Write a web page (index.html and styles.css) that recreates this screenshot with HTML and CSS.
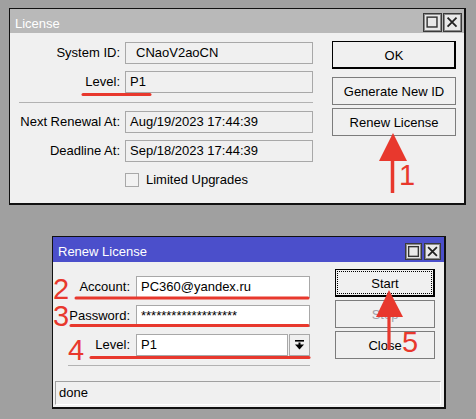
FILE: index.html
```html
<!DOCTYPE html>
<html>
<head>
<meta charset="utf-8">
<link rel="stylesheet" href="styles.css">
</head>
<body>
<div class="win win1">
  <div class="titlebar tb1">
    <span class="title">License</span>
    <div class="tbtns">
      <span class="tbtn"><svg viewBox="0 0 19 19" class="ico"><rect x="3.5" y="3.5" width="11" height="11" fill="#e9e9e9" stroke="#333" stroke-width="1.6"/></svg></span>
      <span class="tbtn"><svg viewBox="0 0 19 19" class="ico"><path d="M4 4 L14 14 M14 4 L4 14" stroke="#222" stroke-width="2" fill="none"/></svg></span>
    </div>
  </div>
  <div class="body1">
    <div class="form1">
      <span class="lbl">System ID:</span>
      <span class="field ro"><span class="sid">CNaoV2aoCN</span></span>
      <span class="lbl">Level:</span>
      <span class="field ro">P1</span>
      <span class="sep sep1"></span>
      <span class="lbl">Next Renewal At:</span>
      <span class="field ro">Aug/19/2023 17:44:39</span>
      <span class="lbl">Deadline At:</span>
      <span class="field ro">Sep/18/2023 17:44:39</span>
      <span class="chkrow"><span class="chk"></span><span>Limited Upgrades</span></span>
    </div>
    <div class="btns1">
      <button class="btn def okbtn">OK</button>
      <button class="btn genbtn">Generate New ID</button>
      <button class="btn">Renew License</button>
    </div>
  </div>
</div>

<div class="win win2">
  <div class="titlebar tb2">
    <span class="title">Renew License</span>
    <div class="tbtns">
      <span class="tbtn small"><svg viewBox="0 0 17 17" class="ico"><rect x="3" y="3" width="11" height="11" fill="#e9e9e9" stroke="#333" stroke-width="1.6"/></svg></span>
      <span class="tbtn small"><svg viewBox="0 0 17 17" class="ico"><path d="M3.5 3.5 L13.5 13.5 M13.5 3.5 L3.5 13.5" stroke="#222" stroke-width="2" fill="none"/></svg></span>
    </div>
  </div>
  <div class="main2">
    <div class="form2">
      <span class="lbl">Account:</span>
      <span class="field wh">PC360@yandex.ru</span>
      <span class="lbl">Password:</span>
      <span class="field wh">*******************</span>
      <span class="lbl">Level:</span>
      <span class="combo"><span class="field wh grow">P1</span><span class="drop"><svg viewBox="0 0 9 10" width="9" height="10"><rect x="0" y="0" width="9" height="1.6" fill="#000"/><rect x="3.5" y="2.5" width="2" height="2.5" fill="#000"/><path d="M0 4.5 L9 4.5 L4.5 9.5 Z" fill="#000"/></svg></span></span>
      <span class="sep sep2"></span>
    </div>
    <div class="btns2">
      <button class="btn def focus">Start</button>
      <button class="btn dis">Stop</button>
      <button class="btn">Close</button>
    </div>
  </div>
  <div class="status">done</div>
</div>

<svg class="marks" width="476" height="419" viewBox="0 0 476 419">
  <g stroke="#e8382d" stroke-width="3" stroke-linecap="round" fill="none">
    <line x1="83" y1="94.5" x2="150" y2="94.5"/>
    <line x1="76" y1="298" x2="308" y2="298"/>
    <line x1="71" y1="325.5" x2="308" y2="325.5"/>
    <line x1="91" y1="357.5" x2="309" y2="357.5"/>
    <line x1="392.5" y1="158" x2="392.5" y2="193" stroke-width="3.5" stroke-linecap="butt"/>
    <line x1="389" y1="315" x2="389" y2="350" stroke-width="3.2" stroke-linecap="butt"/>
  </g>
  <g fill="#e8382d">
    <path d="M393 133 L379 161 L407 161 Z"/>
    <path d="M389 290 L376 317 L403 317 Z"/>
  </g>
</svg>
<span class="num n1">1</span>
<span class="num n2">2</span>
<span class="num n3">3</span>
<span class="num n4">4</span>
<span class="num n5">5</span>
</body>
</html>
```

FILE: styles.css
```css
* { box-sizing: border-box; }
html, body { margin: 0; padding: 0; }
body {
  background: #a0a0a0;
  font-family: "Liberation Sans", Arial, sans-serif;
  font-size: 13px;
  color: #000;
  width: 476px;
  height: 419px;
  overflow: hidden;
  position: relative;
}
.win {
  background: #f0f0f0;
  border-style: solid;
  border-color: #111;
  border-width: 1px 2px 2px 1px;
  display: flex;
  flex-direction: column;
}
.win1 { margin: 8px 0 0 9px; width: 457px; height: 197px; }
.win2 { margin: 31px 0 0 52px; width: 394px; height: 173px; }

.titlebar { display: flex; justify-content: space-between; align-items: flex-start; color: #fff; flex: none; }
.title { line-height: 15px; padding-top: 3px; white-space: nowrap; }
.tb1 { background: #b9b9b9; height: 24px; padding: 4px 2px 0 5px; }
.tb2 { background: #4b4fcb; height: 25px; padding: 6px 3px 0 5px; }
.tb2 .title { padding-top: 1px; }
.tbtns { display: flex; gap: 1px; }
.tb2 .tbtns { gap: 2px; }
.tbtn {
  width: 19px; height: 19px;
  background: #e9e9e9;
  border: 1px solid #3a3a3a;
  box-shadow: inset 0 0 0 1px #8a8a8a;
  display: flex;
}
.tbtn.small { width: 17px; height: 17px; }
.ico { width: 100%; height: 100%; display: block; }

.lbl { text-align: right; line-height: 22px; white-space: nowrap; }
.field {
  height: 22px;
  border: 1px solid #a8a8a8;
  padding-left: 4px;
  line-height: 20px;
  white-space: nowrap;
  overflow: hidden;
}
.field.ro { background: #f0f0f0; }
.field.wh { background: #fff; }
.sid { padding-left: 6px; }
.sep { grid-column: 1 / -1; height: 1px; background: #b2b2b2; }

.body1 { display: flex; padding: 8px 0 0 0; }
.form1 {
  display: grid;
  grid-template-columns: 110px 188px;
  column-gap: 5px;
  row-gap: 7px;
  padding-top: 1px;
  align-content: start;
}
.sep1 { margin: 2px 0 1px 9px; }
.chkrow { grid-column: 2; display: flex; align-items: center; gap: 7px; height: 14px; margin-top: 4px; line-height: 14px; }
.chk { width: 14px; height: 14px; border: 1px solid #a8a8a8; background: #f2f2f2; flex: none; }

.btns1 { display: flex; flex-direction: column; margin-left: 19px; width: 124px; }
.btn {
  height: 28px;
  border: 1px solid #7c7c7c;
  background: #f0f0f0;
  font-family: inherit;
  font-size: 13px;
  color: #000;
  padding: 0;
  text-align: center;
  position: relative;
}
.btn.def { border-color: #000; box-shadow: inset -1px -1px 0 #000; }
.okbtn { margin-bottom: 8px; }
.genbtn { margin-bottom: 3px; }
.focus::after {
  content: "";
  position: absolute;
  inset: 1px 2px 2px 1px;
  border: 1px dotted #000;
}
.btn.dis { color: #a0a0a8; }

.main2 { display: flex; padding-top: 7px; flex: none; }
.form2 {
  display: grid;
  grid-template-columns: 77px 174px;
  column-gap: 6px;
  row-gap: 7px;
  margin-top: 7px;
  align-content: start;
}
.combo { display: flex; }
.grow { flex: 1; }
.drop {
  width: 21px; height: 22px; margin-left: 1px;
  border: 1px solid #a8a8a8;
  background: #f0f0f0;
  display: flex; align-items: center; justify-content: center;
}
.sep2 { margin: 2px 0 0 15px; }
.btns2 { display: flex; flex-direction: column; gap: 3px; margin-left: 25px; width: 100px; }
.status {
  margin: 15px 3px 0 2px;
  height: 24px;
  border-style: solid;
  border-width: 1px;
  border-color: #a0a0a0 #fff #fff #a0a0a0;
  padding-left: 3px;
  line-height: 22px;
}

.marks { position: absolute; left: 0; top: 0; pointer-events: none; }
.num {
  position: absolute;
  font-family: "Liberation Sans", Arial, sans-serif;
  font-size: 29px;
  line-height: 29px;
  color: #e8382d;
}
.n1 { left: 399px; top: 161px; }
.n2 { left: 53px; top: 275px; }
.n3 { left: 53px; top: 302px; }
.n4 { left: 68px; top: 336px; }
.n5 { left: 402px; top: 328px; }
```
